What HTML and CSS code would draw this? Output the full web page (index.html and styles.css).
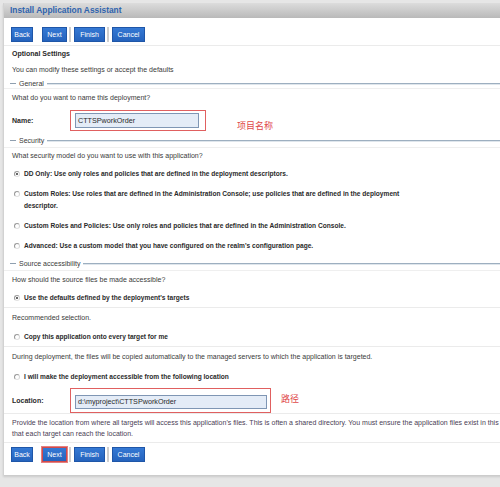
FILE: index.html
```html
<!DOCTYPE html>
<html>
<head>
<meta charset="utf-8">
<link rel="stylesheet" href="styles.css">
</head>
<body>
<div class="page">
  <div class="panel">
    <div class="titlebar">Install Application Assistant</div>
    <div class="btnrow top">
      <span class="btn b-back">Back</span>
      <span class="btn b-next">Next</span>
      <span class="sep"></span>
      <span class="btn b-finish">Finish</span>
      <span class="sep"></span>
      <span class="btn b-cancel">Cancel</span>
    </div>
    <div class="row h16 bold">Optional Settings</div>
    <div class="row h16">You can modify these settings or accept the defaults</div>
    <div class="legend lg-general"><span class="dash"></span><span class="ltext">General</span><span class="lline"></span></div>
    <div class="row h18">What do you want to name this deployment?</div>
    <div class="field-row name-row">
      <span class="flabel">Name:</span>
      <span class="redbox"><span class="input name-input">CTTSPworkOrder</span></span>
      <span class="note">项目名称</span>
    </div>
    <div class="legend lg-security"><span class="dash"></span><span class="ltext">Security</span><span class="lline"></span></div>
    <div class="row h16">What security model do you want to use with this application?</div>
    <div class="radio-row h19"><span class="radio checked"></span><span class="rtext">DD Only: Use only roles and policies that are defined in the deployment descriptors.</span></div>
    <div class="radio-row two"><span class="radio"></span><span class="rtext">Custom Roles: Use roles that are defined in the Administration Console; use policies that are defined in the deployment<br>descriptor.</span></div>
    <div class="radio-row h18"><span class="radio"></span><span class="rtext">Custom Roles and Policies: Use only roles and policies that are defined in the Administration Console.</span></div>
    <div class="radio-row h22"><span class="radio"></span><span class="rtext">Advanced: Use a custom model that you have configured on the realm's configuration page.</span></div>
    <div class="legend lg-source"><span class="dash"></span><span class="ltext">Source accessibility</span><span class="lline"></span></div>
    <div class="row h18">How should the source files be made accessible?</div>
    <div class="radio-row h18 lined"><span class="radio checked"></span><span class="rtext">Use the defaults defined by the deployment's targets</span></div>
    <div class="row h20">Recommended selection.</div>
    <div class="radio-row h18 lined"><span class="radio"></span><span class="rtext">Copy this application onto every target for me</span></div>
    <div class="row h20">During deployment, the files will be copied automatically to the managed servers to which the application is targeted.</div>
    <div class="radio-row h20"><span class="radio"></span><span class="rtext">I will make the deployment accessible from the following location</span></div>
    <div class="field-row loc-row lined">
      <span class="flabel">Location:</span>
      <span class="redbox"><span class="input loc-input">d:\myproject\CTTSPworkOrder</span></span>
      <span class="note">路径</span>
    </div>
    <div class="row para lined">Provide the location from where all targets will access this application's files. This is often a shared directory. You must ensure the application files exist in this location and<br>that each target can reach the location.</div>
    <div class="btnrow bottom">
      <span class="btn b-back">Back</span>
      <span class="btn b-next marked">Next</span>
      <span class="sep"></span>
      <span class="btn b-finish">Finish</span>
      <span class="sep"></span>
      <span class="btn b-cancel">Cancel</span>
    </div>
  </div>
</div>
</body>
</html>
```
FILE: styles.css
```css
html, body {
  margin: 0;
  padding: 0;
}
body {
  width: 500px;
  height: 487px;
  overflow: hidden;
  background: #e6e6e6;
  font-family: "Liberation Sans", Arial, sans-serif;
  font-size: 7px;
  color: #3a3a3a;
}
.page {
  padding: 3px 0 0 3px;
  width: 560px;
}
.panel {
  background: #fff;
  border-left: 1px solid #d2d2d2;
  height: 472px;
  box-shadow: 0 2px 2px rgba(0,0,0,0.12);
}
.titlebar {
  height: 15px;
  line-height: 15px;
  padding-left: 6px;
  background: linear-gradient(to bottom, #dcdcdc, #b9b9b9);
  color: #2f63ad;
  font-weight: bold;
  font-size: 8.4px;
}
.btnrow {
  display: flex;
  align-items: center;
  padding-left: 7px;
}
.btnrow.top {
  padding-top: 9px;
  padding-bottom: 3px;
  border-bottom: 1px solid #ebebeb;
}
.btnrow.bottom {
  padding-top: 4px;
}
.btn {
  box-sizing: border-box;
  height: 15px;
  line-height: 13px;
  text-align: center;
  background: linear-gradient(to bottom, #3579d4, #2563bd);
  border: 1px solid #1f56a8;
  color: #fff;
  font-size: 7px;
}
.b-back { width: 22px; }
.b-next { width: 25px; margin-left: 9px; }
.b-finish { width: 31px; }
.b-cancel { width: 33px; }
.btn.marked {
  border: 1px solid #d24a4a;
  box-shadow: 0 0 0 1px #e58080;
}
.sep {
  width: 2px;
  height: 15px;
  background: #cfcfcf;
  margin: 0 3px 0 2px;
}
.row {
  padding-left: 8px;
  white-space: nowrap;
}
.bold { font-weight: bold; color: #2a2a2a; }
.h16 { height: 16px; line-height: 16px; }
.h18 { height: 18px; line-height: 18px; }
.h19 { height: 19px; line-height: 19px; }
.h20 { height: 20px; line-height: 20px; }
.h22 { height: 22px; line-height: 22px; }
.lined { border-bottom: 1px solid #ebebeb; }
.legend {
  display: flex;
  align-items: center;
  padding-left: 6px;
  border-bottom: 1px solid #efefef;
}
.lg-general { height: 10px; }
.lg-security { height: 14px; }
.lg-source { height: 13px; }
.dash {
  width: 6px;
  height: 1px;
  background: #8f9faf;
  margin-right: 3px;
}
.ltext {
  color: #3a3a3a;
  margin-right: 3px;
  white-space: nowrap;
}
.lline {
  flex: 1;
  height: 1px;
  background: #9dafc0;
  box-shadow: 0 1px 0 #dfe6ec;
}
.field-row {
  display: flex;
  align-items: center;
  padding-left: 8px;
}
.name-row { height: 26px; }
.loc-row { height: 26px; }
.flabel {
  width: 58px;
  font-weight: bold;
  color: #2a2a2a;
}
.redbox {
  box-sizing: border-box;
  border: 1px solid #e06060;
  padding: 2px 3px 3px 4px;
  display: flex;
}
.name-row .redbox { height: 21px; width: 136px; }
.loc-row .redbox { height: 25px; width: 201px; padding-top: 6px; }
.input {
  box-sizing: border-box;
  height: 15px;
  line-height: 13px;
  border: 1px solid #7f96b4;
  background: #e4ecf7;
  color: #2a2a2a;
  padding-left: 2px;
  font-size: 7.2px;
}
.name-input { width: 124px; }
.loc-input { width: 193px; height: 14px; line-height: 12px; }
.note {
  color: #e04848;
  font-size: 9px;
  font-family: "Noto Sans CJK SC", sans-serif;
}
.name-row .note { margin-left: 31px; margin-top: 10px; }
.loc-row .note { margin-left: 10px; margin-top: -4px; }
.radio-row {
  display: flex;
  align-items: center;
  padding-left: 10px;
  white-space: nowrap;
}
.radio-row.two {
  padding-top: 5px;
  padding-bottom: 5px;
  align-items: flex-start;
  line-height: 12px;
}
.radio-row.two .radio { margin-top: 3px; }
.radio {
  box-sizing: border-box;
  width: 6px;
  height: 6px;
  border-radius: 50%;
  border: 1px solid #9a9a9a;
  border-bottom-color: #e2e2e2;
  border-right-color: #d6d6d6;
  margin-right: 4px;
  flex: none;
  position: relative;
}
.radio.checked::after {
  content: "";
  position: absolute;
  left: 1px;
  top: 1px;
  width: 2px;
  height: 2px;
  border-radius: 50%;
  background: #333;
}
.rtext {
  font-weight: bold;
  color: #2a2a2a;
  font-size: 6.6px;
}
.two .rtext { margin-left: -13px; padding-left: 13px; }
.para {
  padding-top: 3px;
  padding-bottom: 3px;
  line-height: 11px;
  color: #4a4055;
}
```
